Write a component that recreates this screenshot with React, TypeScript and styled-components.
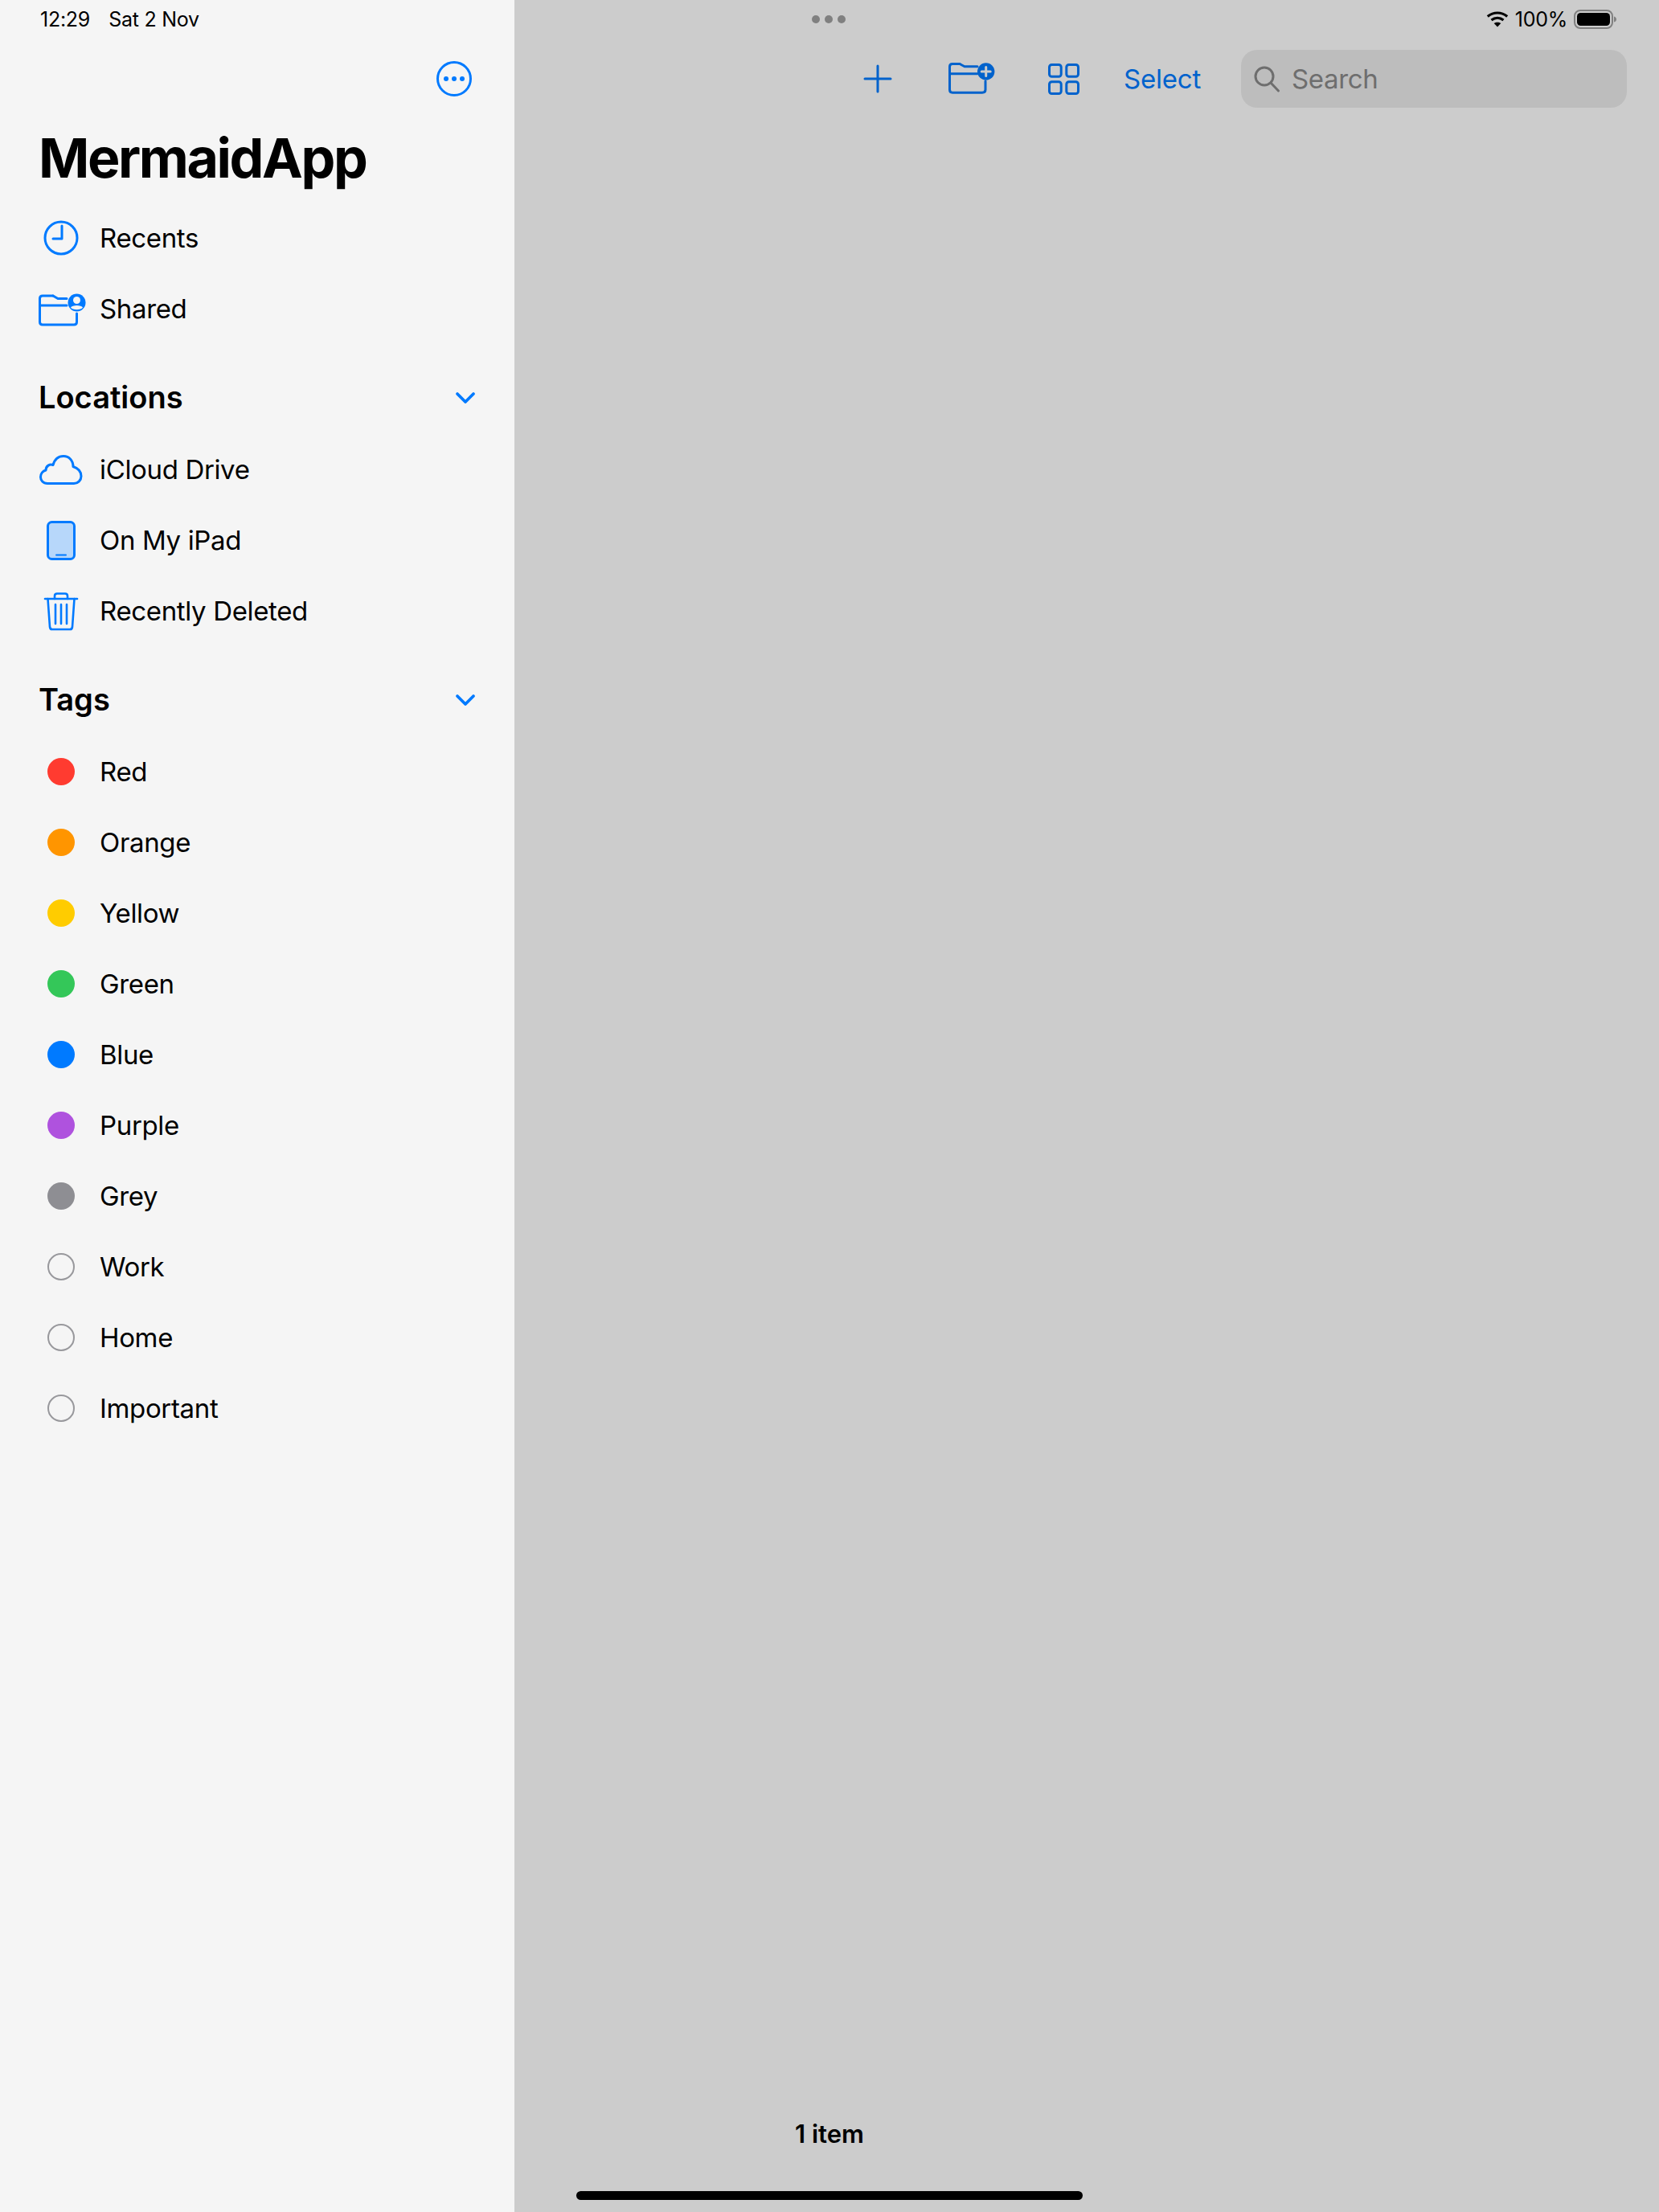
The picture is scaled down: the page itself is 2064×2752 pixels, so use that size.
import React from 'react';
import styled, { createGlobalStyle } from 'styled-components';

const BLUE = '#007aff';
const DIM_BLUE = '#0062cc';
const FONT = `Inter, "Noto Sans", "Liberation Sans", sans-serif`;

const GlobalStyle = createGlobalStyle`
    html, body {
        margin: 0;
        padding: 0;
        background: #cccccc;
    }
    body {
        font-family: ${FONT};
        -webkit-font-smoothing: antialiased;
    }
    * {
        box-sizing: border-box;
    }
`;

const Screen = styled.div`
    position: relative;
    display: grid;
    grid-template-columns: 640px 1fr;
    width: 2064px;
    height: 2752px;
    overflow: hidden;
`;

const StatusBar = styled.div`
    position: absolute;
    top: 0;
    left: 0;
    right: 0;
    height: 48px;
    display: grid;
    grid-template-columns: 1fr auto 1fr;
    align-items: center;
    padding: 0 52px 0 50px;
    font-size: 25px;
    letter-spacing: -0.25px;
    color: #000;
`;

const Clock = styled.div`
    display: flex;
    gap: 23px;
`;

const Dots = styled.div`
    display: flex;
    gap: 6px;
`;

const Dot = styled.span`
    width: 10px;
    height: 10px;
    border-radius: 50%;
    background: #808080;
`;

const StatusRight = styled.div`
    display: flex;
    align-items: center;
    justify-content: flex-end;
    gap: 8px;
`;

const Sidebar = styled.aside`
    display: flex;
    flex-direction: column;
    padding: 54px 48px 0;
    background: #f5f5f5;
`;

const SidebarTop = styled.div`
    display: flex;
    align-items: center;
    justify-content: flex-end;
    height: 88px;
    padding-right: 5px;
`;

const Title = styled.h1`
    margin: 4px 0 6px;
    font-size: 68px;
    line-height: 100px;
    font-weight: 700;
    letter-spacing: -2.4px;
    color: #000;
`;

const NavList = styled.div<{ $top?: number }>`
    display: flex;
    flex-direction: column;
    margin-top: ${(p) => p.$top ?? 0}px;
`;

const NavRow = styled.div`
    display: flex;
    align-items: center;
    gap: 20px;
    height: 88px;
    font-size: 33px;
    letter-spacing: -0.35px;
    color: #000;
`;

const IconBox = styled.span`
    display: flex;
    align-items: center;
    justify-content: center;
    flex: none;
    width: 56px;
    height: 56px;
`;

const TagDot = styled.span<{ $color?: string }>`
    width: 34px;
    height: 34px;
    border-radius: 50%;
    background: ${(p) => p.$color ?? 'transparent'};
    border: ${(p) => (p.$color ? 'none' : '2px solid #98989c')};
`;

const SectionHeader = styled.div<{ $top: number }>`
    display: flex;
    align-items: center;
    justify-content: space-between;
    height: 88px;
    margin-top: ${(p) => p.$top}px;
    padding-right: 1px;
    font-size: 38px;
    font-weight: 600;
    color: #000;
`;

const ChevronSlot = styled.span`
    display: flex;
    margin-top: 2px;
`;

const Main = styled.main`
    display: flex;
    flex-direction: column;
    padding-top: 54px;
    background: #cccccc;
`;

const Toolbar = styled.div`
    display: flex;
    align-items: center;
    justify-content: flex-end;
    height: 88px;
    padding-right: 40px;
`;

const ToolButton = styled.button<{ $width: number }>`
    display: flex;
    align-items: center;
    justify-content: center;
    width: ${(p) => p.$width}px;
    height: 88px;
    padding: 0;
    border: none;
    background: none;
`;

const SelectButton = styled.button`
    margin: 0 50px 0 38px;
    padding: 0;
    border: none;
    background: none;
    font-family: inherit;
    font-size: 33px;
    letter-spacing: -0.2px;
    color: ${DIM_BLUE};
`;

const SearchField = styled.div`
    display: flex;
    align-items: center;
    gap: 15px;
    width: 480px;
    height: 72px;
    padding-left: 16px;
    border-radius: 20px;
    background: #bdbdbd;
    font-size: 33px;
    letter-spacing: -0.35px;
    color: #6e6e6e;
`;

const Content = styled.div`
    flex: 1;
`;

const Footer = styled.div`
    width: 784px;
    height: 40px;
    margin-bottom: 77px;
    text-align: center;
    font-size: 31px;
    line-height: 40px;
    font-weight: 600;
    color: #000;
`;

const HomeIndicator = styled.div`
    position: absolute;
    left: 717px;
    bottom: 15px;
    width: 630px;
    height: 11px;
    border-radius: 6px;
    background: #000;
`;

const Stroke = ({ size = [56, 56], children, color = BLUE, width = 3 }: { size?: number[]; children: React.ReactNode; color?: string; width?: number }) => (
    <svg
        width={size[0]}
        height={size[1]}
        viewBox={`0 0 ${size[0]} ${size[1]}`}
        fill="none"
        stroke={color}
        strokeWidth={width}
        strokeLinecap="round"
        strokeLinejoin="round"
        style={{ flex: 'none', overflow: 'visible' }}
    >
        {children}
    </svg>
);

const EllipsisIcon = () => (
    <Stroke size={[44, 44]}>
        <circle cx="22" cy="22" r="20.5" />
        <g fill={BLUE} stroke="none">
            <circle cx="12" cy="22" r="3" />
            <circle cx="22" cy="22" r="3" />
            <circle cx="32" cy="22" r="3" />
        </g>
    </Stroke>
);

const ClockIcon = () => (
    <Stroke>
        <circle cx="28" cy="28" r="20" />
        <path d="M29 13v16h-11" />
    </Stroke>
);

const SharedFolderIcon = () => (
    <Stroke>
        <path d="M18 12H5Q1.500 12 1.500 15.500V44.500Q1.500 48 5 48H44Q47.500 48 47.500 44.500V34" />
        <path d="M18 12l6 3.500H35M1.500 24H35" />
        <circle cx="47.500" cy="20.500" r="11" fill={BLUE} stroke="none" />
        <circle cx="47.500" cy="17.500" r="4.500" fill="#f5f5f5" stroke="none" />
        <path d="M40 26.500c1.500-3.500 13.500-3.500 15 0-2 3.500-13 3.500-15 0z" fill="#f5f5f5" stroke="none" />
    </Stroke>
);

const CloudIcon = () => (
    <Stroke>
        <path d="M11 45.500C5.500 45.500 2.500 41.500 2.500 37.500c0-4 2.500-7.500 6.500-8.500 0-5.500 5-8 9-6.500C20 15.500 25 11.500 31 11.500c7 0 12 5.500 12 13 4.500 1.500 10 4 10 12 0 5-4 9-9 9z" />
    </Stroke>
);

const TabletIcon = () => (
    <Stroke>
        <rect x="11.500" y="5.500" width="33" height="46" rx="5" fill="#b7d7fa" />
        <path d="M22 46.500h12" strokeWidth="2" />
    </Stroke>
);

const TrashIcon = () => (
    <Stroke width={2.6}>
        <path d="M8 13h40" />
        <path d="M20 13V9.500C20 7.500 21 6.500 23 6.500h10c2 0 3 1 3 3V13" />
        <path d="M11.500 13l2.500 35c.2 2 1.200 3 3 3h22c1.800 0 2.800-1 3-3l2.500-35" />
        <path d="M21 20v24M28 20v24M35 20v24" />
    </Stroke>
);

const ChevronIcon = () => (
    <Stroke size={[24, 16]} width={3.8}>
        <path d="M2 3l10 10L22 3" />
    </Stroke>
);

const PlusIcon = () => (
    <Stroke size={[36, 36]} color={DIM_BLUE}>
        <path d="M18 2v32M2 18h32" />
    </Stroke>
);

const NewFolderIcon = () => (
    <Stroke size={[64, 44]} color={DIM_BLUE}>
        <path d="M14 3.500H5Q1.500 3.500 1.500 7V35.500Q1.500 39.200 5 39.200H42Q46 39.200 46 35.500V25" />
        <path d="M14 3.500l6 3.200H36M1.500 15.700H36" />
        <circle cx="46.700" cy="13" r="10.700" fill={DIM_BLUE} stroke="none" />
        <path d="M46.700 7.500v11M41.200 13h11" stroke="#cccccc" strokeWidth="3" />
    </Stroke>
);

const GridIcon = () => (
    <Stroke size={[39, 39]} color={DIM_BLUE}>
        <rect x="1.500" y="1.500" width="14.700" height="14.700" rx="3" />
        <rect x="22.800" y="1.500" width="14.700" height="14.700" rx="3" />
        <rect x="1.500" y="22.800" width="14.700" height="14.700" rx="3" />
        <rect x="22.800" y="22.800" width="14.700" height="14.700" rx="3" />
    </Stroke>
);

const SearchIcon = () => (
    <Stroke size={[32, 32]} color="#6e6e6e">
        <circle cx="13" cy="13" r="11" />
        <path d="M21 21l9.500 10" />
    </Stroke>
);

const WifiIcon = () => (
    <Stroke size={[28, 20]} color="#000" width={3.2}>
        <path d="M1.800 6.500C9 .5 19 .5 26.200 6.500" strokeLinecap="butt" />
        <path d="M6.500 11C11 7.500 17 7.500 21.500 11" strokeLinecap="butt" />
        <path d="M14 19.500l-4.300-4.500c2.500-1.800 6.100-1.800 8.600 0z" fill="#000" stroke="none" />
    </Stroke>
);

const BatteryIcon = () => (
    <svg width="54" height="24" viewBox="0 0 54 24" style={{ flex: 'none' }}>
        <rect x="1" y="1" width="47" height="22" rx="7" fill="none" stroke="#808080" strokeWidth="2" />
        <rect x="4" y="4" width="41" height="16" rx="4.500" fill="#000" />
        <path d="M50 8.500c2 .5 3 2 3 3.500s-1 3-3 3.500z" fill="#808080" />
    </svg>
);

const LIBRARY = [
    { label: 'Recents', icon: <ClockIcon /> },
    { label: 'Shared', icon: <SharedFolderIcon /> },
];

const LOCATIONS = [
    { label: 'iCloud Drive', icon: <CloudIcon /> },
    { label: 'On My iPad', icon: <TabletIcon /> },
    { label: 'Recently Deleted', icon: <TrashIcon /> },
];

const TAGS: { label: string; color?: string }[] = [
    { label: 'Red', color: '#ff3b30' },
    { label: 'Orange', color: '#ff9500' },
    { label: 'Yellow', color: '#ffcc00' },
    { label: 'Green', color: '#34c759' },
    { label: 'Blue', color: '#007aff' },
    { label: 'Purple', color: '#af52de' },
    { label: 'Grey', color: '#8e8e93' },
    { label: 'Work' },
    { label: 'Home' },
    { label: 'Important' },
];

export default function App() {
    return (
        <>
            <GlobalStyle />
            <Screen>
                <Sidebar>
                    <SidebarTop>
                        <EllipsisIcon />
                    </SidebarTop>
                    <Title>MermaidApp</Title>
                    <NavList>
                        {LIBRARY.map((item) => (
                            <NavRow key={item.label}>
                                <IconBox>{item.icon}</IconBox>
                                {item.label}
                            </NavRow>
                        ))}
                    </NavList>
                    <SectionHeader $top={22}>
                        Locations
                        <ChevronSlot>
                            <ChevronIcon />
                        </ChevronSlot>
                    </SectionHeader>
                    <NavList $top={2}>
                        {LOCATIONS.map((item) => (
                            <NavRow key={item.label}>
                                <IconBox>{item.icon}</IconBox>
                                {item.label}
                            </NavRow>
                        ))}
                    </NavList>
                    <SectionHeader $top={22}>
                        Tags
                        <ChevronSlot>
                            <ChevronIcon />
                        </ChevronSlot>
                    </SectionHeader>
                    <NavList $top={2}>
                        {TAGS.map((tag) => (
                            <NavRow key={tag.label}>
                                <IconBox>
                                    <TagDot $color={tag.color} />
                                </IconBox>
                                {tag.label}
                            </NavRow>
                        ))}
                    </NavList>
                </Sidebar>
                <Main>
                    <Toolbar>
                        <ToolButton $width={88}>
                            <PlusIcon />
                        </ToolButton>
                        <ToolButton $width={152}>
                            <NewFolderIcon />
                        </ToolButton>
                        <ToolButton $width={72}>
                            <GridIcon />
                        </ToolButton>
                        <SelectButton>Select</SelectButton>
                        <SearchField>
                            <SearchIcon />
                            Search
                        </SearchField>
                    </Toolbar>
                    <Content />
                    <Footer>1 item</Footer>
                </Main>
                <StatusBar>
                    <Clock>
                        <span>12:29</span>
                        <span>Sat 2 Nov</span>
                    </Clock>
                    <Dots>
                        <Dot />
                        <Dot />
                        <Dot />
                    </Dots>
                    <StatusRight>
                        <WifiIcon />
                        <span>100%</span>
                        <BatteryIcon />
                    </StatusRight>
                </StatusBar>
                <HomeIndicator />
            </Screen>
        </>
    );
}
